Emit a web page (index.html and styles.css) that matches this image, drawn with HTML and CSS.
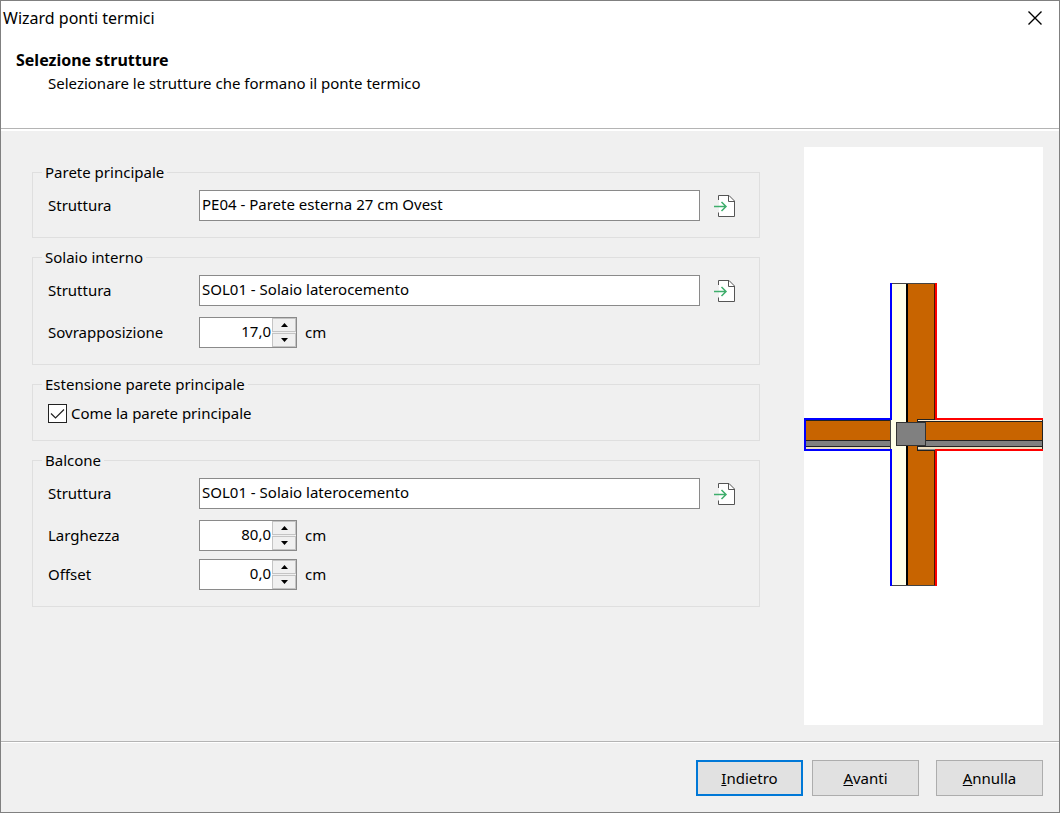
FILE: index.html
```
<!DOCTYPE html>
<html lang="it">
<head>
<meta charset="utf-8">
<title>Wizard ponti termici</title>
<link rel="stylesheet" href="styles.css">
</head>
<body>
<svg class="defs" aria-hidden="true">
  <symbol id="icon-pick" viewBox="0 0 22 22">
    <path d="M5 4V.5H14.500L20.500 6V21.500H5V17.500" fill="#fff" stroke="none"/>
    <path d="M4.500 5V.5H15L20.500 6V21.500H4.500V17.500M14.500.5V6.500H20.500" fill="none" stroke="#555"/>
    <path d="M0 11.500H12M7.500 7L12 11.500L7.500 16" fill="none" stroke="#3fae6c" stroke-width="1.500"/>
  </symbol>
  <symbol id="icon-up" viewBox="0 0 7 4"><path d="M0 4L3.500 0L7 4Z"/></symbol>
  <symbol id="icon-down" viewBox="0 0 7 4"><path d="M0 0L3.500 4L7 0Z"/></symbol>
</svg>
<div class="dialog">
  <header class="header">
    <div class="titlebar">
      <span class="title">Wizard ponti termici</span>
      <button class="close" type="button" aria-label="Chiudi">
        <svg viewBox="0 0 14 14" width="14" height="14"><path d="M.5.500L13.500 13.500M13.500.5L.5 13.500" stroke="#000" stroke-width="1.400"/></svg>
      </button>
    </div>
    <h1 class="heading">Selezione strutture</h1>
    <p class="subheading">Selezionare le strutture che formano il ponte termico</p>
  </header>

  <main class="content">
    <form class="groups" id="wizard">
      <fieldset class="group">
        <legend>Parete principale</legend>
        <div class="rows">
          <div class="row">
            <label for="parete">Struttura</label>
            <input class="field" id="parete" type="text" value="PE04 - Parete esterna 27 cm Ovest">
            <button class="pick" type="button" aria-label="Scegli parete"><svg><use href="#icon-pick"/></svg></button>
          </div>
        </div>
      </fieldset>

      <fieldset class="group">
        <legend>Solaio interno</legend>
        <div class="rows">
          <div class="row">
            <label for="solaio">Struttura</label>
            <input class="field" id="solaio" type="text" value="SOL01 - Solaio laterocemento">
            <button class="pick" type="button" aria-label="Scegli solaio"><svg><use href="#icon-pick"/></svg></button>
          </div>
          <div class="row">
            <label for="sovrapposizione">Sovrapposizione</label>
            <div class="spin">
              <input id="sovrapposizione" type="text" value="17,0">
              <div class="steps">
                <button type="button" aria-label="Aumenta"><svg><use href="#icon-up"/></svg></button>
                <button type="button" aria-label="Diminuisci"><svg><use href="#icon-down"/></svg></button>
              </div>
            </div>
            <span class="unit">cm</span>
          </div>
        </div>
      </fieldset>

      <fieldset class="group">
        <legend>Estensione parete principale</legend>
        <div class="rows">
          <label class="check"><input type="checkbox" checked><span>Come la parete principale</span></label>
        </div>
      </fieldset>

      <fieldset class="group">
        <legend>Balcone</legend>
        <div class="rows">
          <div class="row">
            <label for="balcone">Struttura</label>
            <input class="field" id="balcone" type="text" value="SOL01 - Solaio laterocemento">
            <button class="pick" type="button" aria-label="Scegli balcone"><svg><use href="#icon-pick"/></svg></button>
          </div>
          <div class="row">
            <label for="larghezza">Larghezza</label>
            <div class="spin">
              <input id="larghezza" type="text" value="80,0">
              <div class="steps">
                <button type="button" aria-label="Aumenta"><svg><use href="#icon-up"/></svg></button>
                <button type="button" aria-label="Diminuisci"><svg><use href="#icon-down"/></svg></button>
              </div>
            </div>
            <span class="unit">cm</span>
          </div>
          <div class="row row-tight">
            <label for="offset">Offset</label>
            <div class="spin">
              <input id="offset" type="text" value="0,0">
              <div class="steps">
                <button type="button" aria-label="Aumenta"><svg><use href="#icon-up"/></svg></button>
                <button type="button" aria-label="Diminuisci"><svg><use href="#icon-down"/></svg></button>
              </div>
            </div>
            <span class="unit">cm</span>
          </div>
        </div>
      </fieldset>
    </form>

    <div class="preview">
      <svg viewBox="804 284 239 303" shape-rendering="crispEdges" role="img" aria-label="Sezione del ponte termico">
        <!-- vertical wall -->
        <rect x="892" y="284" width="14" height="303" fill="#ffffe8"/>
        <rect x="908" y="284" width="27" height="303" fill="#c86400"/>
        <rect x="906" y="284" width="2" height="303" fill="#000"/>
        <rect x="934" y="284" width="1" height="303" fill="#4a1800"/>
        <rect x="890" y="284" width="46" height="1" fill="#444"/>
        <rect x="890" y="586" width="46" height="1" fill="#444"/>
        <!-- left slab -->
        <rect x="806" y="421" width="85" height="30" fill="#222"/>
        <rect x="806" y="422" width="85" height="19" fill="#c86400"/>
        <rect x="806" y="442" width="85" height="5" fill="#808080"/>
        <rect x="806" y="448" width="85" height="2" fill="#f0e0c0"/>
        <!-- right slab -->
        <rect x="917" y="420" width="126" height="3" fill="#222"/>
        <rect x="918" y="421" width="125" height="1" fill="#fff0d8"/>
        <rect x="926" y="423" width="117" height="18" fill="#c86400"/>
        <rect x="926" y="441" width="117" height="1" fill="#222"/>
        <rect x="926" y="442" width="117" height="5" fill="#808080"/>
        <rect x="917" y="447" width="126" height="5" fill="#222"/>
        <rect x="918" y="448" width="125" height="2" fill="#f0e0c0"/>
        <rect x="918" y="450" width="18" height="1" fill="#888"/>
        <rect x="1042" y="421" width="1" height="30" fill="#222"/>
        <!-- beam -->
        <rect x="896" y="423" width="30" height="24" fill="#333"/>
        <rect x="897" y="424" width="28" height="22" fill="#808080"/>
        <!-- outer and inner boundaries -->
        <path d="M891 284V420H805V451H891V587" fill="none" stroke="#00f" stroke-width="2"/>
        <rect x="890" y="421" width="1" height="29" fill="#444"/>
        <rect x="891" y="421" width="1" height="29" fill="#ffffe8"/>
        <path d="M936 284V420H1043M1043 451H936V587" fill="none" stroke="#f00" stroke-width="2"/>
      </svg>
    </div>
  </main>

  <footer class="footer">
    <button class="btn btn-default" type="button"><u>I</u>ndietro</button>
    <button class="btn" type="button"><u>A</u>vanti</button>
    <button class="btn btn-cancel" type="button"><u>A</u>nnulla</button>
  </footer>
</div>
</body>
</html>
```
FILE: styles.css
```
* { box-sizing: border-box; }
body {
  margin: 0;
  font: 15px/22px "Noto Sans", "Open Sans", sans-serif;
  color: #000;
}
button, input { font: inherit; color: inherit; margin: 0; }
.defs { display: none; }
.dialog {
  min-height: 100vh;
  display: flex;
  flex-direction: column;
  background: #f0f0f0;
  border: 1px solid #808080;
}
.header {
  background: #fff;
  padding-bottom: 34px;
  border-bottom: 1px solid #b4b4b4;
  box-shadow: 0 2px #fff;
}
.titlebar {
  display: flex;
  justify-content: space-between;
  align-items: center;
  height: 34px;
  padding: 0 17px 0 2px;
}
.title { font-size: 16px; }
.close { display: flex; padding: 0; border: 0; background: none; }
.heading { margin: 14px 0 0 15px; font-size: 16px; font-weight: 700; line-height: 22px; }
.subheading { margin: 1px 0 0 47px; }
.content {
  flex: 1;
  display: grid;
  grid-template-columns: 1fr 239px;
  gap: 44px;
  padding: 18px 16px 16px 31px;
}
.groups { display: flex; flex-direction: column; gap: 8px; padding-top: 14px; }
.group { margin: 0; padding: 0; border: 1px solid #dfdfdf; min-width: 0; }
.group legend { margin-left: 9px; padding: 0 3px; }
.rows { padding: 7px 23px 16px 15px; }
.row { display: flex; align-items: center; }
.row + .row { margin-top: 11px; }
.row + .row-tight { margin-top: 8px; }
.row > label { width: 151px; padding-bottom: 2px; }
.field {
  flex: 1;
  min-width: 0;
  height: 31px;
  padding: 0 2px 3px;
  border: 1px solid #8a8a8a;
  background: #fff;
}
.pick { display: flex; margin-left: 14px; padding: 0; border: 0; background: none; }
.pick svg { width: 22px; height: 22px; }
.spin {
  display: flex;
  width: 98px;
  height: 31px;
  border: 1px solid #8a8a8a;
  background: #fff;
}
.spin input {
  flex: 1;
  min-width: 0;
  padding: 0 1px 3px 0;
  border: 0;
  background: none;
  text-align: right;
}
.steps { display: flex; flex-direction: column; gap: 1px; width: 24px; background: #f0f0f0; }
.steps button {
  flex: 1;
  display: flex;
  align-items: center;
  justify-content: center;
  padding: 0;
  border: 1px solid #c4c4c4;
  background: #f0f0f0;
}
.steps svg { width: 7px; height: 4px; }
.unit { margin-left: 8px; padding-bottom: 2px; }
.check { display: flex; align-items: center; gap: 4px; }
.check input {
  appearance: none;
  width: 19px;
  height: 19px;
  border: 1px solid #222;
  background: #fff;
}
.check input:checked {
  background: #fff url("data:image/svg+xml,%3Csvg xmlns='http://www.w3.org/2000/svg' viewBox='0 0 17 17'%3E%3Cpath d='M2 8.500L6.500 13L15 4.500' fill='none' stroke='%23222' stroke-width='1.200'/%3E%3C/svg%3E");
}
.preview {
  display: flex;
  align-items: center;
  padding-bottom: 3px;
  background: #fff;
}
.preview svg { display: block; width: 100%; }
.footer {
  display: flex;
  justify-content: flex-end;
  gap: 9px;
  padding: 18px 16px 16px;
  border-top: 1px solid #b4b4b4;
  box-shadow: inset 0 1px #fff;
}
.btn {
  width: 107px;
  height: 36px;
  padding: 0;
  border: 1px solid #adadad;
  background: #e1e1e1;
}
.btn-default { border: 2px solid #0078d7; }
.btn-cancel { margin-left: 8px; }
```
